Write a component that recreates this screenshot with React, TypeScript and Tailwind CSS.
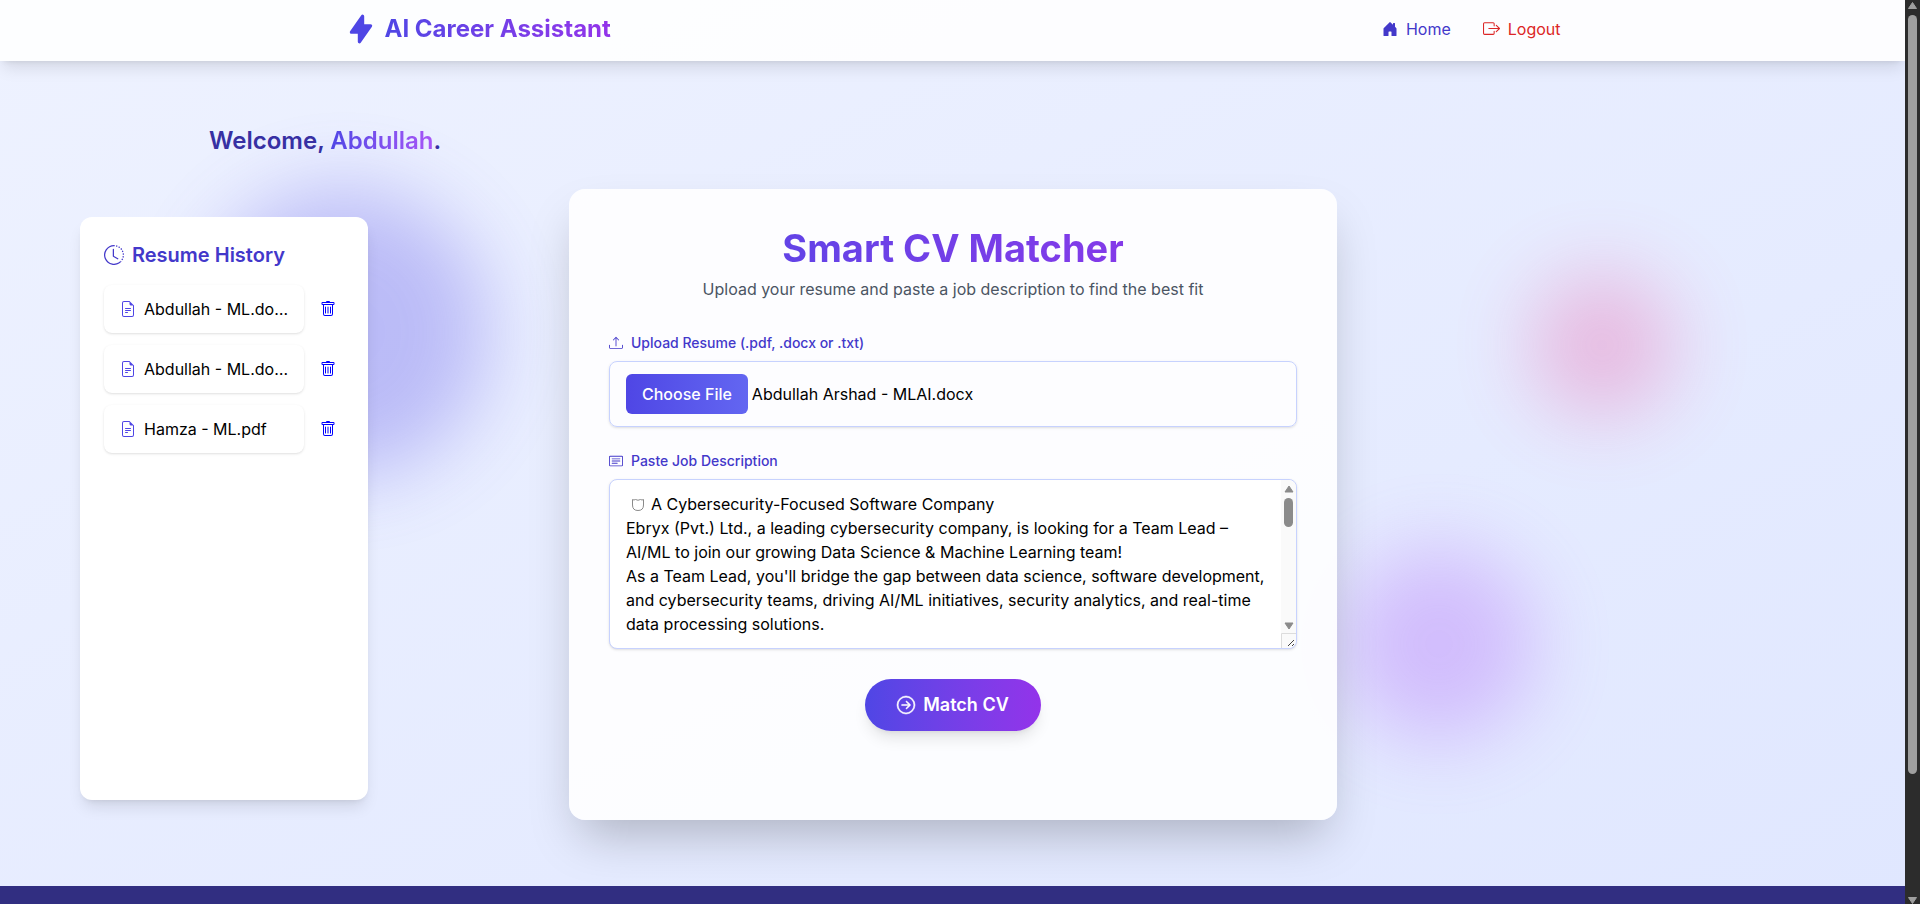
import React, { useState } from "react";
import {
  BsHouseDoorFill,
  BsBoxArrowRight,
  BsClockHistory,
  BsFileEarmarkText,
  BsTrash,
  BsUpload,
  BsCardText,
  BsArrowRightCircle,
} from "react-icons/bs";

const RESUMES = [
  { id: 1, name: "Abdullah - ML.docx" },
  { id: 2, name: "Abdullah - ML.docx" },
  { id: 3, name: "Hamza - ML.pdf" },
];

const MAX_NAME = 16;

// Keeps long file names on one line inside the history cards.
function shorten(name: string) {
  return name.length > MAX_NAME ? `${name.slice(0, MAX_NAME)}…` : name;
}

const JOB_TEXT = `\u2003\u00a0 A Cybersecurity-Focused Software Company
Ebryx (Pvt.) Ltd., a leading cybersecurity company, is looking for a Team Lead – AI/ML to join our growing Data Science & Machine Learning team!
As a Team Lead, you'll bridge the gap between data science, software development, and cybersecurity teams, driving AI/ML initiatives, security analytics, and real-time data processing solutions.`;

function Navbar() {
  return (
    <nav className="relative z-20 bg-white/90 shadow-lg">
      <div className="mx-auto flex h-[61px] max-w-7xl items-center justify-between px-8 pb-1">
        <a href="#home" className="flex items-center gap-2">
          <svg viewBox="0 0 20 20" fill="currentColor" className="size-8 text-[#4f46e5]">
            <path
              fillRule="evenodd"
              clipRule="evenodd"
              d="M11.3 1.046A1 1 0 0112 2v5h4a1 1 0 01.82 1.573l-7 10A1 1 0 018 18v-5H4a1 1 0 01-.82-1.573l7-10a1 1 0 011.12-.38z"
            />
          </svg>
          <span className="bg-linear-to-r from-[#4f46e5] to-[#9333ea] bg-clip-text text-2xl font-bold text-transparent">
            AI Career Assistant
          </span>
        </a>
        <div className="flex items-center gap-8">
          <a href="#home" className="flex items-center gap-2 text-[#4338ca]">
            <BsHouseDoorFill className="size-4" />
            Home
          </a>
          <a href="#logout" className="flex items-center gap-2 text-[#dc2626]">
            <BsBoxArrowRight className="size-[17px]" />
            Logout
          </a>
        </div>
      </div>
    </nav>
  );
}

function ResumeHistory() {
  return (
    <aside className="mt-7 h-[583px] w-72 shrink-0 rounded-xl bg-white p-6 shadow-lg">
      <h2 className="mb-4 flex items-center gap-2 text-xl font-semibold text-[#4338ca]">
        <BsClockHistory className="size-5" />
        Resume History
      </h2>
      <ul className="flex flex-col gap-3">
        {RESUMES.map((resume) => (
          <li key={resume.id} className="flex items-center gap-4">
            <a
              href="#resume"
              className="flex h-12 w-[200px] items-center gap-2 rounded-lg bg-white px-4 text-black shadow-sm"
            >
              <BsFileEarmarkText className="size-4 shrink-0 text-[#4f46e5]" />
              <span className="whitespace-nowrap">{shorten(resume.name)}</span>
            </a>
            <button type="button" aria-label="Delete resume" className="text-[#0000ff]">
              <BsTrash className="size-4" />
            </button>
          </li>
        ))}
      </ul>
    </aside>
  );
}

function TextScrollbar() {
  return (
    <div className="absolute top-px right-px bottom-px flex w-[15px] flex-col items-center rounded-r-lg bg-[#fafafa]">
      <svg viewBox="0 0 16 18" className="h-[18px] w-4">
        <path d="M8 6 L12 12 H4 Z" fill="#8b8b8b" stroke="#8b8b8b" strokeLinejoin="round" />
      </svg>
      <div className="h-[29px] w-[9px] rounded-full bg-[#8b8b8b]" />
      <div className="grow" />
      <svg viewBox="0 0 16 16" className="size-4">
        <path d="M8 12 L12 6 H4 Z" fill="#8b8b8b" stroke="#8b8b8b" strokeLinejoin="round" />
      </svg>
      <svg viewBox="0 0 15 15" className="size-[15px]">
        <path d="M0.5 15 V0.5 H15" fill="none" stroke="#dcdcdc" />
        <path d="M7 13 L13 7 M11 13 L13 11" stroke="#444" />
      </svg>
    </div>
  );
}

function MatcherCard() {
  const [job, setJob] = useState(JOB_TEXT);
  return (
    <main className="h-[631px] w-full max-w-3xl rounded-2xl bg-white/90 px-10 pt-9 shadow-2xl">
      <header className="text-center">
        <h1 className="bg-linear-to-r from-[#4f46e5] to-[#9333ea] bg-clip-text text-[38px] leading-[46px] font-bold text-transparent">
          Smart CV Matcher
        </h1>
        <p className="mt-1.5 text-base text-[#4b5563]">
          Upload your resume and paste a job description to find the best fit
        </p>
      </header>
      <form className="mt-8 flex flex-col" onSubmit={(e) => e.preventDefault()}>
        <label htmlFor="resume" className="mb-2 flex items-center gap-2 text-sm font-medium text-[#4338ca]">
          <BsUpload className="size-3.5" />
          Upload Resume (.pdf, .docx or .txt)
        </label>
        <div className="relative flex h-[66px] items-center gap-1 rounded-lg border border-[#c7d2fe] px-4 shadow-sm">
          <input id="resume" type="file" accept=".pdf,.docx,.txt" className="sr-only" />
          <label
            htmlFor="resume"
            className="flex h-10 items-center rounded-md bg-linear-to-r from-[#4f46e5] to-[#6366f1] px-4 font-medium text-white"
          >
            Choose File
          </label>
          <span className="text-black">Abdullah Arshad - MLAI.docx</span>
        </div>
        <label htmlFor="job" className="mt-6 mb-2 flex items-center gap-2 text-sm font-medium text-[#4338ca]">
          <BsCardText className="size-3.5" />
          Paste Job Description
        </label>
        <div className="relative">
          <textarea
            id="job"
            value={job}
            onChange={(e) => setJob(e.target.value)}
            className="block h-[170px] w-full resize-none overflow-hidden rounded-lg border border-[#c7d2fe] bg-white py-3 pr-7 pl-4 text-base text-black shadow-sm"
          />
          <svg viewBox="0 0 14 14" className="absolute top-[19px] left-[22px] size-3.5">
            <path
              d="M1.5 1.5 Q3 2.5 4.5 1.5 Q7 3 9.5 1.5 Q11 2.5 12.5 1.5 V7 Q12.5 12.5 7 12.5 Q1.5 12.5 1.5 7 Z"
              fill="none"
              stroke="#8a8a8a"
            />
          </svg>
          <TextScrollbar />
        </div>
        <button
          type="submit"
          className="mt-[30px] flex h-[52px] items-center gap-2 self-center rounded-full bg-linear-to-r from-[#4f46e5] to-[#9333ea] px-8 text-lg font-semibold text-white shadow-lg"
        >
          <BsArrowRightCircle className="size-[18px] overflow-visible stroke-current stroke-[0.5]" />
          Match CV
        </button>
      </form>
    </main>
  );
}

function PageScrollbar() {
  return (
    <div className="flex w-[15px] shrink-0 flex-col items-center bg-[#2c2c2c]">
      <svg viewBox="0 0 15 15" className="size-[15px]">
        <path d="M7.5 2.5 L11.5 8.5 H3.5 Z" fill="#9f9f9f" stroke="#9f9f9f" strokeLinejoin="round" />
      </svg>
      <div className="h-[84%] w-[9px] rounded-full bg-[#9f9f9f]" />
      <div className="grow" />
      <svg viewBox="0 0 15 9" className="h-[9px] w-[15px]">
        <path d="M7.5 8.5 L11.5 2.5 H3.5 Z" fill="#9f9f9f" stroke="#9f9f9f" strokeLinejoin="round" />
      </svg>
    </div>
  );
}

export default function App() {
  return (
    <div className="flex h-screen overflow-hidden font-[Inter,sans-serif] text-base">
      <div className="relative flex min-w-0 grow flex-col overflow-hidden bg-linear-to-br from-[#eef2ff] to-[#e0e7ff]">
        <div className="absolute top-[188px] left-[200px] size-72 rounded-full bg-[#4f46e5] opacity-30 blur-2xl" />
        <div className="absolute top-[548px] left-[1343px] size-48 rounded-full bg-[#a855f7] opacity-30 blur-2xl" />
        <div className="absolute top-[273px] left-[1530px] size-36 rounded-full bg-[#ec4899] opacity-30 blur-2xl" />
        <Navbar />
        <div className="relative grow">
          <p className="mt-[60px] ml-[209px] h-[68px] text-2xl leading-10 font-semibold text-[#3730a3]">
            Welcome,{" "}
            <span className="bg-linear-to-r from-[#4f46e5] to-[#a855f7] bg-clip-text text-transparent">
              Abdullah
            </span>
            .
          </p>
          <div className="flex items-start gap-[201px] pr-20 pl-20">
            <ResumeHistory />
            <MatcherCard />
          </div>
        </div>
        <footer className="relative h-[18px] shrink-0 bg-[#312e81]" />
      </div>
      <PageScrollbar />
    </div>
  );
}
